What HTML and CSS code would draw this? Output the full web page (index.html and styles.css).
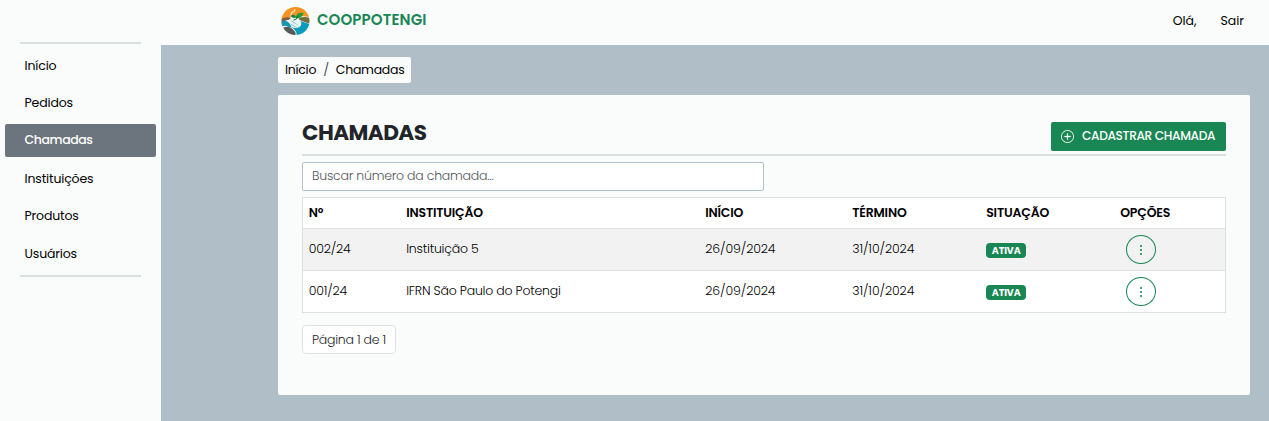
FILE: index.html
```html
<!DOCTYPE html>
<html lang="pt-BR">
<head>
<meta charset="utf-8">
<title>Chamadas - COOPPOTENGI</title>
<link rel="stylesheet" href="styles.css">
</head>
<body>
<div class="app">
  <aside class="sidebar">
    <nav class="menu">
      <a class="menu-item">Início</a>
      <a class="menu-item">Pedidos</a>
      <a class="menu-item active">Chamadas</a>
      <a class="menu-item">Instituições</a>
      <a class="menu-item">Produtos</a>
      <a class="menu-item">Usuários</a>
    </nav>
  </aside>
  <div class="page">
    <header class="topbar">
      <svg class="logo" viewBox="0 0 30 30">
        <defs><clipPath id="disc"><circle cx="15" cy="15" r="14"/></clipPath></defs>
        <g clip-path="url(#disc)">
          <rect width="30" height="30" fill="#fbfdfc"/>
          <path d="M0 0H30V11L20 10L10 11L7 13L0 14Z" fill="#f7931e"/>
          <path d="M18 12Q24 10 30 12V18Q26 17 19 14Z" fill="#6f7040"/>
          <path d="M0 13Q6 10 11 12L8 14Q3 14 3 18L0 19Z" fill="#7a6248"/>
          <path d="M0 19Q1 14 5 14.500L9 17L11 21L8 21Q3 18 0 22Z" fill="#1696b0"/>
          <path d="M20 15Q26 17 30 18.500V30H16Q17 24 10 21L15 22L20 20Z" fill="#079bbd"/>
          <path d="M2 22Q8 19 12 23Q16 26 15 30H5Z" fill="#575a5b"/>
          <path d="M9 13Q15 11 20 15Q22 18 19 21Q15 23 12 21L8 16Z" fill="#e9f4f4"/>
          <path d="M11 15L17 19M10 18L16 21.500" stroke="#73b7c5" stroke-width=".8"/>
          <path d="M12 12Q9 9 12 6Q15 6 14 3" fill="none" stroke="#f7e6c4" stroke-width="1.3"/>
        </g>
        <path d="M10 10Q13 7 16 11Q13 13.500 10 10Z" fill="#14883e"/>
        <path d="M15 12Q16 6 23 7Q22 13 15 12Z" fill="#219b3c"/>
        <path d="M13 14Q17 14 17 10" fill="none" stroke="#126c32"/>
      </svg>
      <span class="brand">COOPPOTENGI</span>
      <span class="hello">Olá,</span>
      <a class="logout">Sair</a>
    </header>
    <main class="content">
      <div class="breadcrumb"><span>Início</span><span class="slash">/</span><span>Chamadas</span></div>
      <section class="card">
        <div class="card-head">
          <h1>CHAMADAS</h1>
          <button class="add">
            <svg width="13" height="13" viewBox="0 0 16 16" fill="#fff"><path d="M8 15A7 7 0 1 1 8 1a7 7 0 0 1 0 14m0 1A8 8 0 1 0 8 0a8 8 0 0 0 0 16"/><path d="M8 4a.5.5 0 0 1 .5.5v3h3a.5.5 0 0 1 0 1h-3v3a.5.5 0 0 1-1 0v-3h-3a.5.5 0 0 1 0-1h3v-3A.5.5 0 0 1 8 4" stroke="#fff" stroke-width=".4"/></svg>
            <span>CADASTRAR CHAMADA</span>
          </button>
        </div>
        <input class="search" placeholder="Buscar número da chamada...">
        <table>
          <colgroup><col class="c1"><col class="c2"><col class="c3"><col class="c4"><col class="c5"><col></colgroup>
          <thead><tr><th class="first">Nº</th><th>INSTITUIÇÃO</th><th>INÍCIO</th><th>TÉRMINO</th><th>SITUAÇÃO</th><th>OPÇÕES</th></tr></thead>
          <tbody>
            <tr class="striped"><td class="num first">002/24</td><td class="name">Instituição 5</td><td>26/09/2024</td><td>31/10/2024</td><td><span class="badge">ATIVA</span></td>
              <td><span class="more"><svg width="12" height="12" viewBox="0 0 12 12" fill="#198754"><circle cx="6" cy="2" r="1.1"/><circle cx="6" cy="6" r="1.1"/><circle cx="6" cy="10" r="1.1"/></svg></span></td></tr>
            <tr><td class="num first">001/24</td><td class="name">IFRN São Paulo do Potengi</td><td>26/09/2024</td><td>31/10/2024</td><td><span class="badge">ATIVA</span></td>
              <td><span class="more"><svg width="12" height="12" viewBox="0 0 12 12" fill="#198754"><circle cx="6" cy="2" r="1.1"/><circle cx="6" cy="6" r="1.1"/><circle cx="6" cy="10" r="1.1"/></svg></span></td></tr>
          </tbody>
        </table>
        <div class="pager">Página 1 de 1</div>
      </section>
    </main>
  </div>
</div>
</body>
</html>
```
FILE: styles.css
```css
* { box-sizing: border-box; }
body { margin: 0; font-family: Poppins, Inter, "Open Sans", sans-serif; font-size: 12.5px; color: #000; overflow: hidden; }
.app { display: flex; height: 421px; background: #b0bfc7; }
.sidebar { width: 161px; background: #fafcfb; padding: 42px 5px 0; }
.menu { display: flex; flex-direction: column; gap: 4.7px; letter-spacing: -.15px; }
.menu::before, .menu::after { content: ""; height: 2px; margin: 0 15px; background: #d9e0de; }
.menu-item { height: 33px; line-height: 33.5px; padding-left: 19.5px; border-radius: 2px; white-space: nowrap; }
.active { line-height: 32px; background: #6c757d; color: #fff; font-weight: 500; letter-spacing: -.4px; }
.page { flex: 1; display: flex; flex-direction: column; }
.topbar { height: 45px; background: #fafcfb; display: flex; align-items: center; padding: 0 25px 4px 119px; }
.logo { width: 31px; height: 30px; }
.brand { margin: -2px 0 0 6px; flex: 1; font-size: 15px; font-weight: 600; letter-spacing: .1px; color: #198754; }
.hello { margin-right: 24px; }
.content { padding: 12px 19px 0 117px; display: flex; flex-direction: column; align-items: flex-start; gap: 12px; }
.breadcrumb { height: 26px; width: 133px; line-height: 26px; padding-left: 7px; background: #fafcfb; border-radius: 2px; display: flex; letter-spacing: -.28px; }
.slash { margin: 0 7px; color: #495057; }
.card { width: 972px; height: 300px; padding: 27px 24px 0; background: #fafcfb; border-radius: 2px; }
.card-head { display: flex; justify-content: space-between; height: 34px; border-bottom: 2px solid #d9e0de; }
h1 { margin: 0; font-size: 21.6px; line-height: 22px; font-weight: 700; letter-spacing: -.55px; color: #212529; }
.add { width: 175px; height: 29px; border: 0; border-radius: 2px; padding: 0 0 1px 10px; background: #198754; color: #fff; font: inherit; font-size: 12.2px; font-weight: 500; letter-spacing: -.36px; display: flex; align-items: center; gap: 8px; white-space: nowrap; }
.search { display: block; width: 462px; height: 29px; margin: 6px 0; padding: 0 9px 1px; border: 1px solid #b0c4d0; border-radius: 2px; font: inherit; font-weight: 300; letter-spacing: -.22px; background: #fff; }
.search::placeholder { color: #50565b; }
table { width: 924px; table-layout: fixed; border-collapse: collapse; background: #fff; border: 1px solid #dbe0e0; }
.c1 { width: 97.5px; } .c2 { width: 299px; } .c3 { width: 147px; } .c4, .c5 { width: 134px; }
tr { height: 42px; border-bottom: 1px solid #dbe0e0; }
thead tr { height: 31px; }
th, td { padding: 0 6px 0 6.2px; text-align: left; white-space: nowrap; }
.first { padding-left: 5.8px; }
th { font-weight: 600; letter-spacing: -.18px; }
td { font-weight: 300; padding-bottom: 2px; letter-spacing: -.1px; }
.num, .name { letter-spacing: -.2px; }
.striped { background: #f2f2f2; }
.badge { display: block; width: 40px; height: 15px; line-height: 15px; margin-top: 4px; border-radius: 4px; background: #198754; color: #fff; font-size: 9.5px; font-weight: 700; letter-spacing: -.1px; text-align: center; }
.more { display: flex; align-items: center; justify-content: center; width: 30px; height: 29px; margin: 2px 0 0 5.8px; border: 1px solid #198754; border-radius: 50%; }
.pager { width: 94px; height: 29px; line-height: 27px; margin-top: 12px; padding-left: 9px; border: 1px solid #dee2e6; border-radius: 4px; background: #fff; color: #212529; font-weight: 300; letter-spacing: -.24px; white-space: nowrap; }
```
